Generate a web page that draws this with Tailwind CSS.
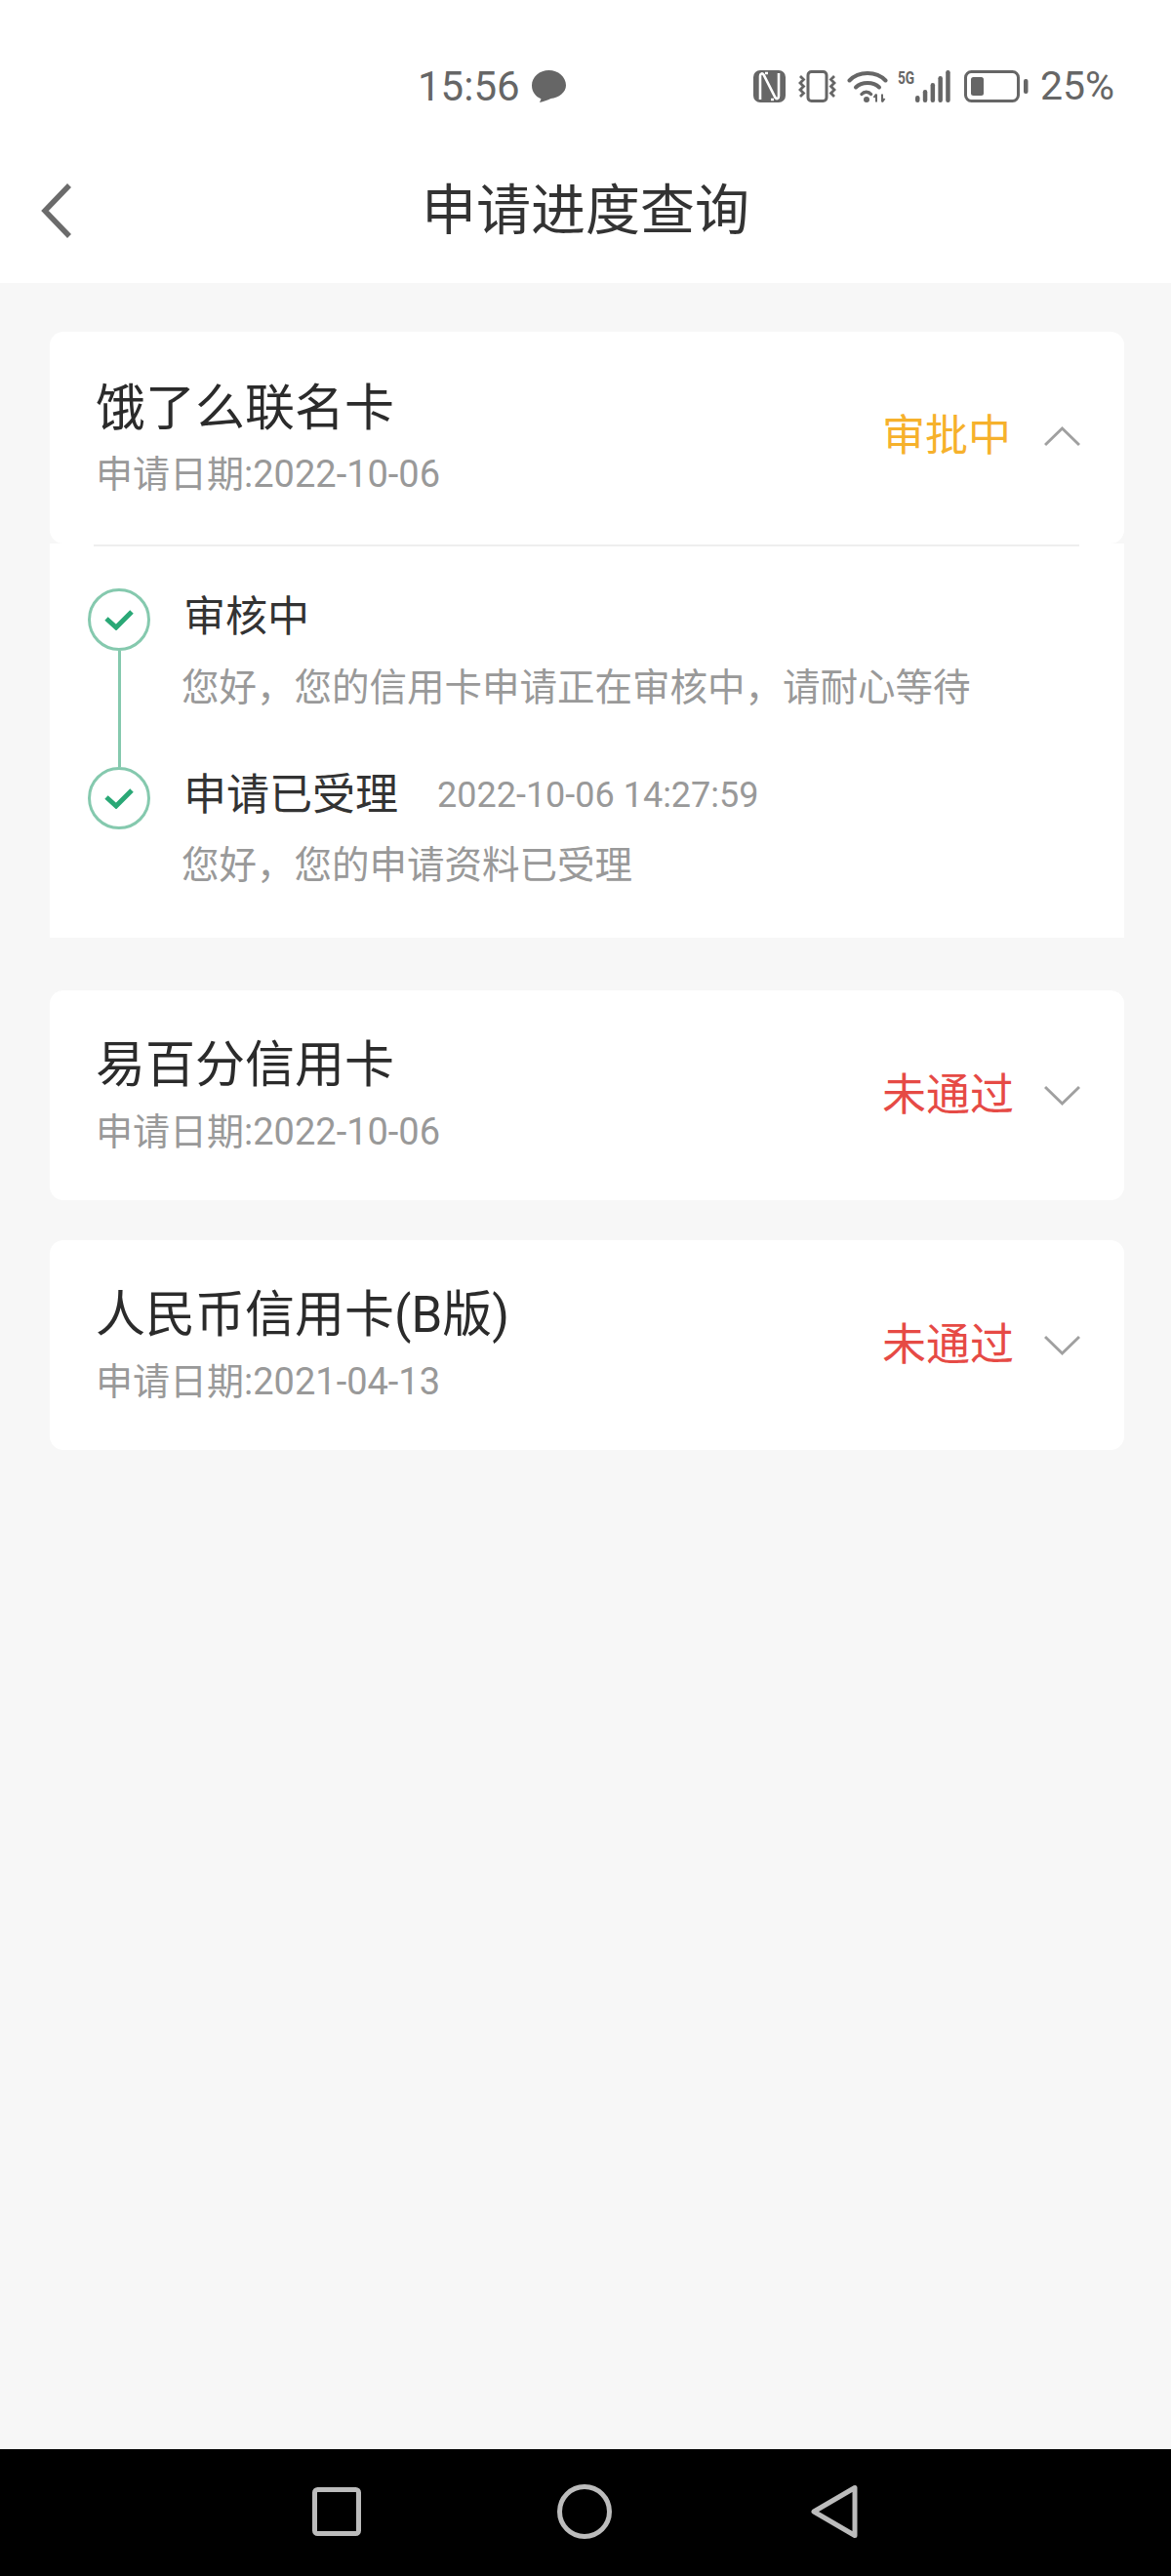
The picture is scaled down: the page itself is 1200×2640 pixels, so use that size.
<!DOCTYPE html>
<html lang="zh-CN">
<head>
    <meta charset="UTF-8">
    <meta name="viewport" content="width=device-width, initial-scale=1.0">
    <title>申请进度查询</title>
    <script src="https://cdn.jsdelivr.net/npm/@tailwindcss/browser@4"></script>
</head>
<body class="w-[1200px] h-[2640px] flex flex-col bg-[#f7f7f7] font-['Roboto','Noto_Sans_CJK_SC',sans-serif]">
    <!-- status bar + title -->
    <header class="h-[290px] bg-white shrink-0">
        <div class="h-[142px] pt-[72px] flex items-start text-[#666666]">
            <span class="ml-[428px] w-[106px] h-[33px] flex items-center text-[42px] leading-none">15:56</span>
            <svg class="ml-[11px] w-[35px] h-[33px]" viewBox="0 0 35 33"><path d="M17.500 0C8 0 0 6.800 0 15.500c0 6.600 4 11.600 9.500 13.800L8 33c4-.8 8-2.300 11.500-4C28 28 35 22.500 35 15.500 35 6.800 27 0 17.500 0z" fill="#666666"/></svg>

            <svg class="ml-[192px] w-[33px] h-[33px]" viewBox="0 0 33 33"><rect width="33" height="33" rx="7" fill="#666666"/><path d="M7 30V6c0-2.500 2-3.500 3.500-1.500L22.500 28c1.500 2 3.500 1 3.500-1.500V3" fill="none" stroke="#ffffff" stroke-width="2.600"/><path d="M12 3h3M18 30h3" stroke="#ffffff" stroke-width="2.400"/></svg>

            <svg class="ml-[12px] w-[41px] h-[33px]" viewBox="0 0 41 33" fill="none" stroke="#666666"><rect x="11" y="1.500" width="19" height="30" rx="3.500" stroke-width="3"/><path d="M3 6l3.500 3.500-3.500 3.500 3.500 3.500-3.500 3.500 3.500 3.500-3.500 3.500M38 6l-3.500 3.500 3.500 3.500-3.500 3.500 3.500 3.500-3.500 3.500 3.500 3.500" stroke-width="2.800"/></svg>

            <svg class="ml-[10px] w-[42px] h-[33px]" viewBox="0 0 42 33" fill="none" stroke="#666666" stroke-linecap="round"><path d="M2.500 10.500C12 .5 30 .5 39.500 10.500" stroke-width="4"/><path d="M9 17.500c6-6 18-6 24 0" stroke-width="4"/><path d="M15 24.500c2.500-3 7-3 9.500 0" stroke-width="3.500"/><circle cx="20" cy="30" r="3" fill="#666666" stroke="none"/><path d="M30 32.500v-8m-2.500 3.500l2.500-3.500M36 24.500v8m2.500-3.500l-2.500 3.500" stroke-width="2" stroke-linecap="butt"/></svg>

            <span class="ml-[10px] w-[18px] h-[15px] text-[19px] leading-[15px] font-bold origin-left scale-x-[0.72] whitespace-nowrap">5G</span>

            <svg class="w-[36px] h-[33px]" viewBox="0 0 36 33" fill="#666666"><rect x="0" y="26" width="4.500" height="7" rx="2.200"/><rect x="7.800" y="20" width="4.500" height="13" rx="2.200"/><rect x="15.600" y="13" width="4.500" height="20" rx="2.200"/><rect x="23.400" y="6" width="4.500" height="27" rx="2.200"/><rect x="31.200" y="0" width="4.500" height="33" rx="2.200"/></svg>

            <svg class="ml-[14px] w-[66px] h-[33px]" viewBox="0 0 66 33"><rect x="1.500" y="1.500" width="54" height="30" rx="6" fill="none" stroke="#666666" stroke-width="3"/><rect x="7" y="7" width="13" height="19" rx="2.500" fill="#666666"/><rect x="61" y="9" width="4.500" height="15" rx="2" fill="#666666"/></svg>

            <span class="ml-[12px] h-[33px] flex items-center text-[41px] leading-none">25%</span>
        </div>

        <div class="h-[148px] grid grid-cols-[1fr_auto_1fr] items-center">
            <svg class="ml-[41px] w-[34px] h-[58px]" viewBox="0 0 34 58"><path d="M30 3L5 29l25 26" fill="none" stroke="#6b6b6b" stroke-width="5.500"/></svg>
            <h1 class="text-[56px] leading-[70px] text-[#333333]">申请进度查询</h1>
            <div></div>
        </div>
    </header>

    <main class="flex-1 pl-[51px] pr-[48px] pt-[50px]">
        <!-- expanded card -->
        <section>
            <div class="h-[217px] bg-white rounded-[14px] flex items-center justify-between pl-[47px] pr-[45px]">
                <div class="pb-[3px]">
                    <p class="h-[70px] text-[51px] leading-[70px] text-[#2b2b2b]">饿了么联名卡</p>
                    <p class="h-[50px] mt-[7px] text-[38px] leading-[50px] text-[#999999]">申请日期:2022-10-06</p>
                </div>
                <div class="flex items-center pb-[3px]">
                    <span class="text-[44px] leading-[60px] text-[#f6b12c]">审批中</span>
                    <svg class="ml-[34px] w-[37px] h-[22px]" viewBox="0 0 37 22"><path d="M1 20L18.500 3 36 20" fill="none" stroke="#a0a0a0" stroke-width="3"/></svg>
                </div>
            </div>

            <div class="bg-white pt-[1px] pb-[49px]">
                <div class="h-[2px] ml-[45px] mr-[46px] bg-[#eeeeee]"></div>

                <div class="pl-[39px] pt-[43px]">
                    <div class="flex h-[183px]">
                        <div class="w-[64px] flex flex-col items-center">
                            <div class="w-[64px] h-[64px] shrink-0 rounded-full border-[3px] border-[#85c9ae] flex items-center justify-center">
                                <svg class="w-[30px] h-[22px]" viewBox="0 0 30 22"><path d="M2 10l10 9L28 3" fill="none" stroke="#2aa876" stroke-width="5"/></svg>
                            </div>
                            <div class="w-[3px] flex-1 bg-[#85c9ae]"></div>
                        </div>
                        <div class="ml-[34px] pt-[2px]">
                            <p class="h-[54px] text-[43px] leading-[54px] text-[#333333]">审核中</p>
                            <p class="-ml-[2px] h-[50px] mt-[21px] text-[38.500px] leading-[50px] text-[#999999]">您好，您的信用卡申请正在审核中，请耐心等待</p>
                        </div>
                    </div>
                    <div class="flex">
                        <div class="w-[64px]">
                            <div class="w-[64px] h-[64px] rounded-full border-[3px] border-[#85c9ae] flex items-center justify-center">
                                <svg class="w-[30px] h-[22px]" viewBox="0 0 30 22"><path d="M2 10l10 9L28 3" fill="none" stroke="#2aa876" stroke-width="5"/></svg>
                            </div>
                        </div>
                        <div class="ml-[34px] pt-[3px]">
                            <div class="h-[52px] flex items-center">
                                <span class="text-[44px] leading-[52px] text-[#333333]">申请已受理</span>
                                <span class="ml-[40px] text-[36px] leading-[52px] text-[#999999]">2022-10-06 14:27:59</span>
                            </div>
                            <p class="-ml-[2px] h-[50px] mt-[21px] text-[38.500px] leading-[50px] text-[#999999]">您好，您的申请资料已受理</p>
                        </div>
                    </div>
                </div>
            </div>
        </section>

        <!-- collapsed cards -->
        <section class="mt-[54px] h-[215px] bg-white rounded-[14px] flex items-center justify-between pl-[47px] pr-[45px]">
            <div class="pb-[3px]">
                <p class="h-[70px] text-[51px] leading-[70px] text-[#2b2b2b]">易百分信用卡</p>
                <p class="h-[50px] mt-[8px] text-[38px] leading-[50px] text-[#999999]">申请日期:2022-10-06</p>
            </div>
            <div class="flex items-center">
                <span class="text-[45px] leading-[60px] text-[#e64a45]">未通过</span>
                <svg class="ml-[31px] w-[37px] h-[22px]" viewBox="0 0 37 22"><path d="M1 2l17.500 17L36 2" fill="none" stroke="#a0a0a0" stroke-width="3"/></svg>
            </div>
        </section>

        <section class="mt-[41px] h-[215px] bg-white rounded-[14px] flex items-center justify-between pl-[47px] pr-[45px]">
            <div class="pb-[3px]">
                <p class="h-[70px] text-[51px] leading-[70px] text-[#2b2b2b]">人民币信用卡(B版)</p>
                <p class="h-[50px] mt-[8px] text-[38px] leading-[50px] text-[#999999]">申请日期:2021-04-13</p>
            </div>
            <div class="flex items-center">
                <span class="text-[45px] leading-[60px] text-[#e64a45]">未通过</span>
                <svg class="ml-[31px] w-[37px] h-[22px]" viewBox="0 0 37 22"><path d="M1 2l17.500 17L36 2" fill="none" stroke="#a0a0a0" stroke-width="3"/></svg>
            </div>
        </section>
    </main>

    <!-- android nav -->
    <nav class="h-[130px] shrink-0 bg-black flex items-center pl-[320px] pb-[2px]">
        <svg class="w-[50px] h-[50px]" viewBox="0 0 50 50"><rect x="2.500" y="2.500" width="45" height="45" rx="3" fill="none" stroke="#bcbcbc" stroke-width="5"/></svg>
        <svg class="ml-[201px] w-[56px] h-[56px]" viewBox="0 0 56 56"><circle cx="28" cy="28" r="25.500" fill="none" stroke="#bcbcbc" stroke-width="5"/></svg>
        <svg class="ml-[204px] w-[48px] h-[56px]" viewBox="0 0 48 56"><path d="M45 3.500v49L3 28z" fill="none" stroke="#bcbcbc" stroke-width="5" stroke-linejoin="round"/></svg>
    </nav>
</body>
</html>
